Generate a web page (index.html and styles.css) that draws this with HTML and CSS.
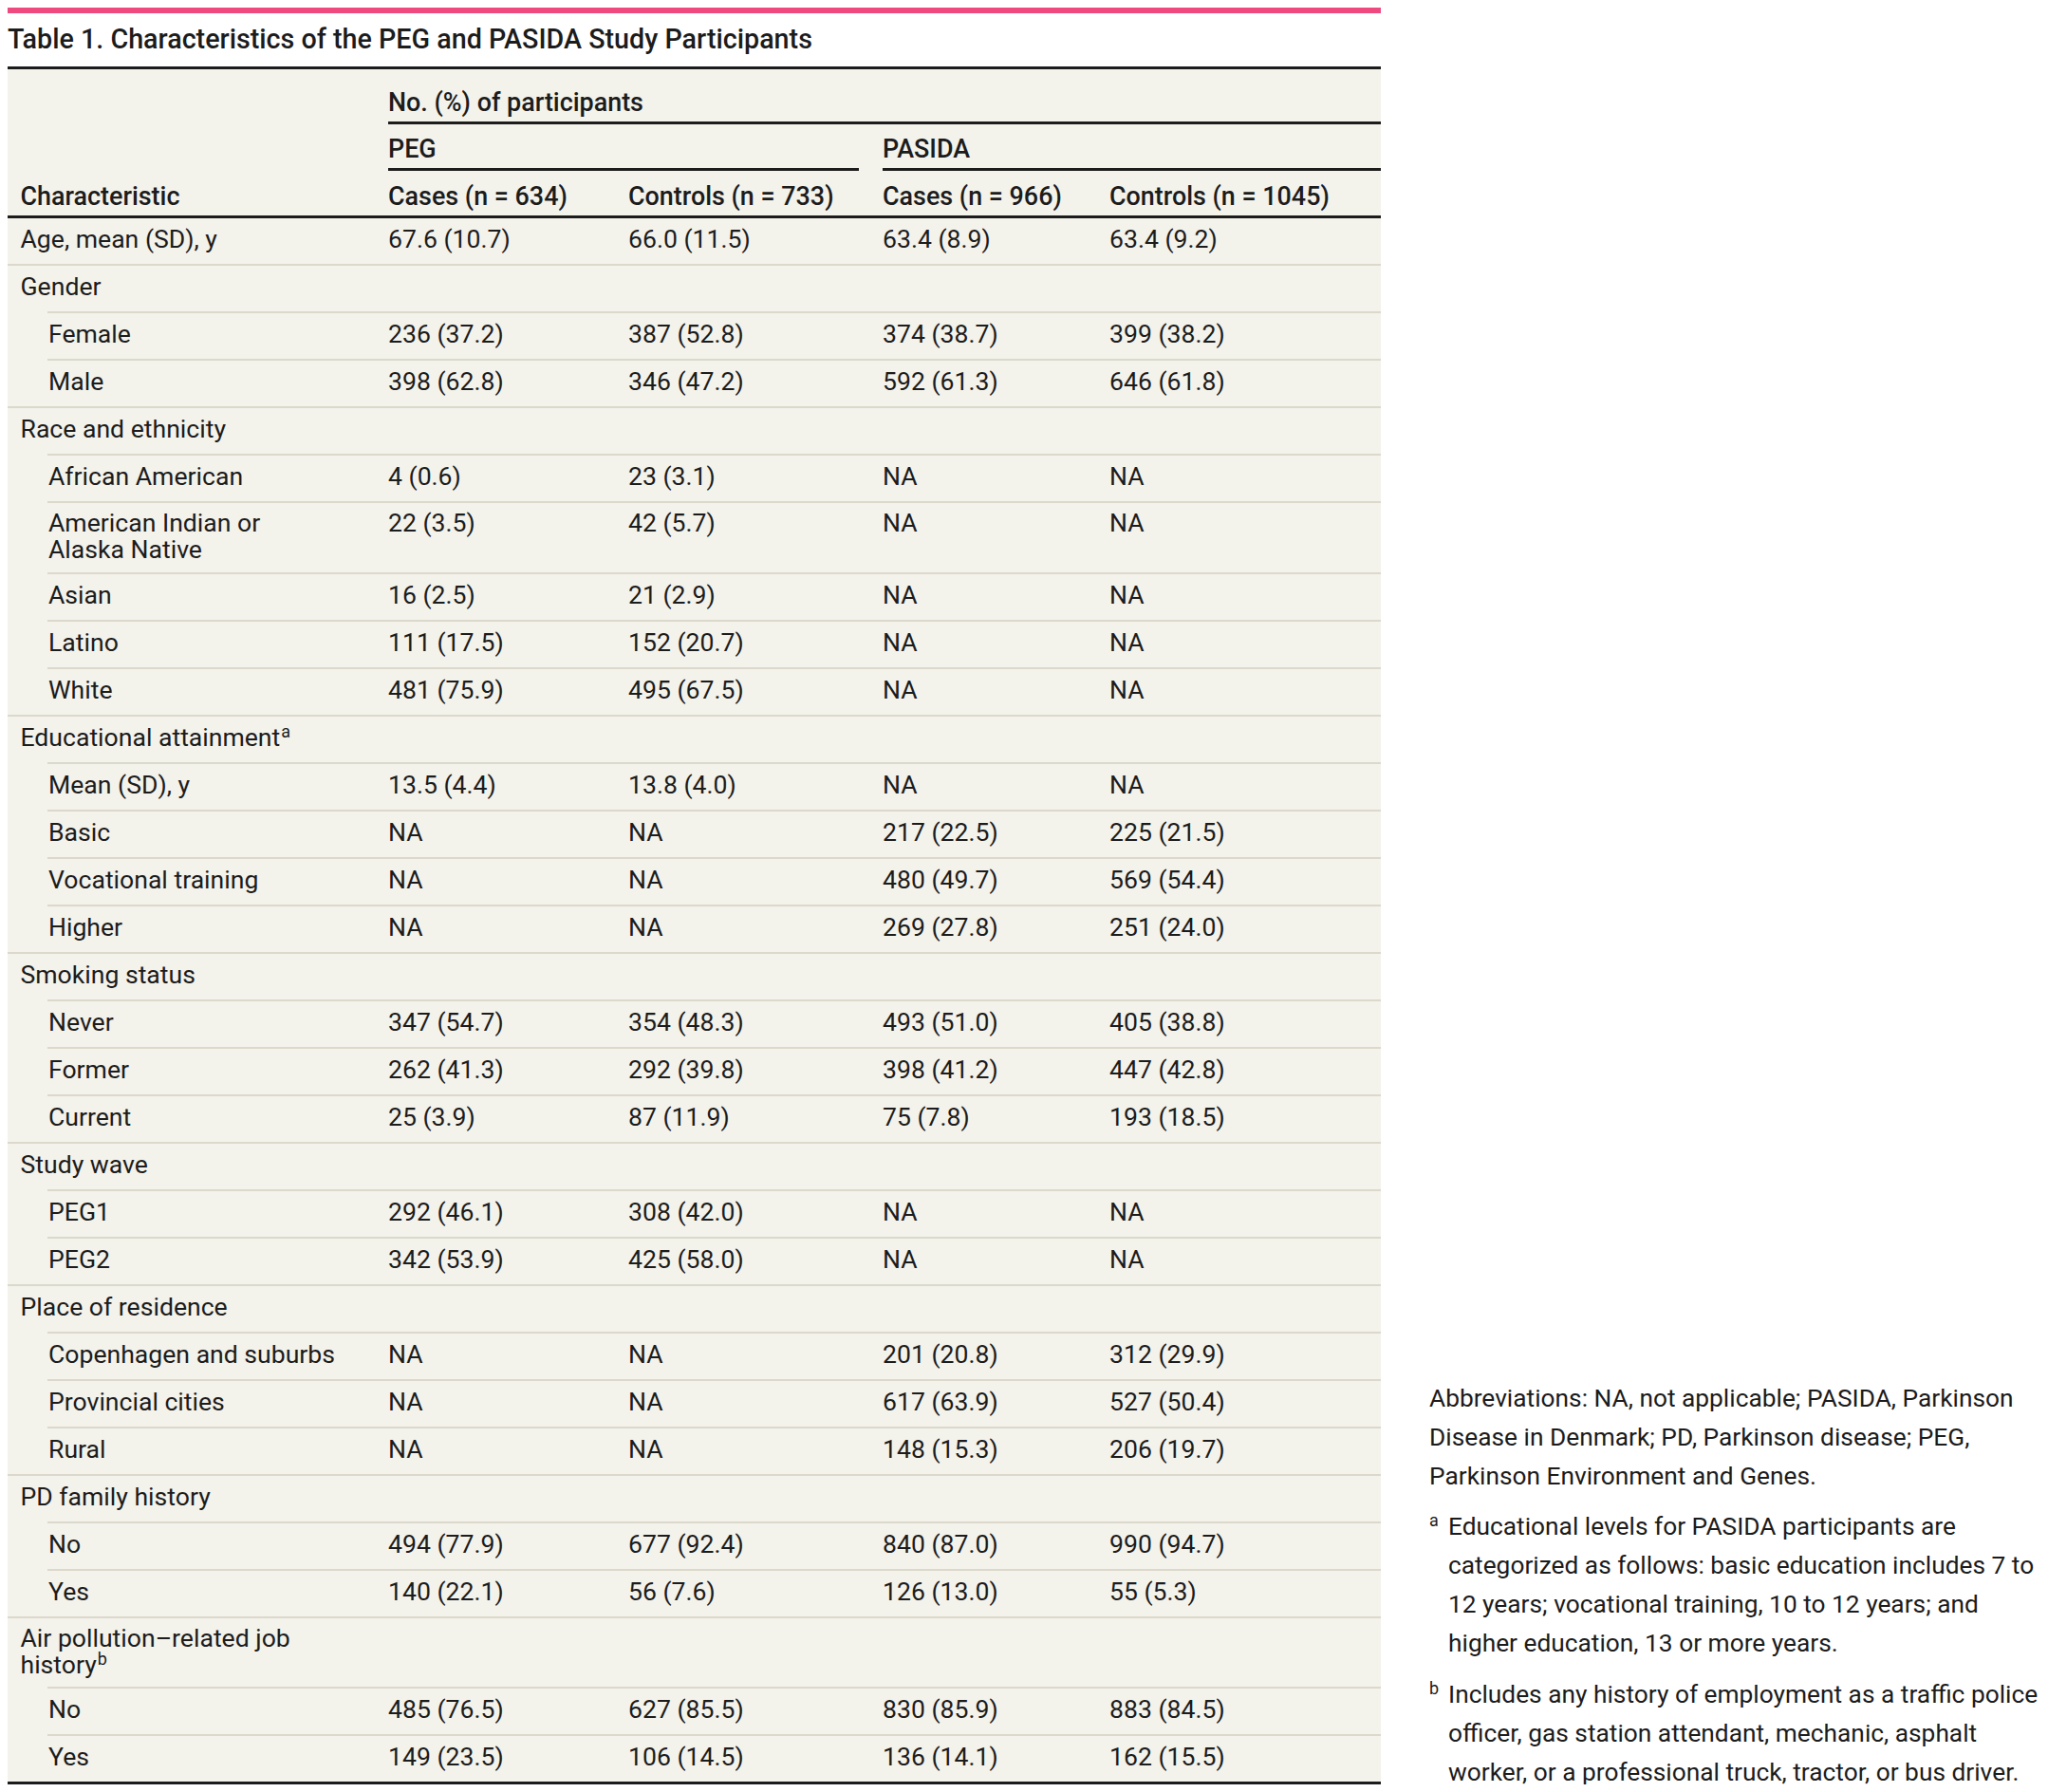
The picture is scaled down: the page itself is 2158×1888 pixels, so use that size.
FILE: index.html
```html
<!DOCTYPE html>
<html lang="en">
<head>
<meta charset="utf-8">
<title>Table 1. Characteristics of the PEG and PASIDA Study Participants</title>
<link rel="stylesheet" href="styles.css">
</head>
<body>
<div class="page">
  <div class="table-wrap">
    <div class="accent"></div>
    <h1 class="title">Table 1. Characteristics of the PEG and PASIDA Study Participants</h1>
    <div class="table">
      <div class="thead">
        <div class="hrow">
          <div class="hcell span-all">No. (%) of participants</div>
        </div>
        <div class="hrow">
          <div class="hcell span-peg">PEG</div>
          <div class="hcell span-pasida">PASIDA</div>
        </div>
        <div class="hrow cols">
          <div class="hcell first">Characteristic</div>
          <div class="hcell">Cases (n = 634)</div>
          <div class="hcell">Controls (n = 733)</div>
          <div class="hcell">Cases (n = 966)</div>
          <div class="hcell">Controls (n = 1045)</div>
        </div>
      </div>
      <div class="tbody">
        <div class="row"><div>Age, mean (SD), y</div><div>67.6 (10.7)</div><div>66.0 (11.5)</div><div>63.4 (8.9)</div><div>63.4 (9.2)</div></div>
        <div class="row"><div>Gender</div></div>
        <div class="row sub"><div>Female</div><div>236 (37.2)</div><div>387 (52.8)</div><div>374 (38.7)</div><div>399 (38.2)</div></div>
        <div class="row sub"><div>Male</div><div>398 (62.8)</div><div>346 (47.2)</div><div>592 (61.3)</div><div>646 (61.8)</div></div>
        <div class="row"><div>Race and ethnicity</div></div>
        <div class="row sub"><div>African American</div><div>4 (0.6)</div><div>23 (3.1)</div><div>NA</div><div>NA</div></div>
        <div class="row sub two"><div>American Indian or<br>Alaska Native</div><div>22 (3.5)</div><div>42 (5.7)</div><div>NA</div><div>NA</div></div>
        <div class="row sub"><div>Asian</div><div>16 (2.5)</div><div>21 (2.9)</div><div>NA</div><div>NA</div></div>
        <div class="row sub"><div>Latino</div><div>111 (17.5)</div><div>152 (20.7)</div><div>NA</div><div>NA</div></div>
        <div class="row sub"><div>White</div><div>481 (75.9)</div><div>495 (67.5)</div><div>NA</div><div>NA</div></div>
        <div class="row"><div>Educational attainment<sup class="sup">a</sup></div></div>
        <div class="row sub"><div>Mean (SD), y</div><div>13.5 (4.4)</div><div>13.8 (4.0)</div><div>NA</div><div>NA</div></div>
        <div class="row sub"><div>Basic</div><div>NA</div><div>NA</div><div>217 (22.5)</div><div>225 (21.5)</div></div>
        <div class="row sub"><div>Vocational training</div><div>NA</div><div>NA</div><div>480 (49.7)</div><div>569 (54.4)</div></div>
        <div class="row sub"><div>Higher</div><div>NA</div><div>NA</div><div>269 (27.8)</div><div>251 (24.0)</div></div>
        <div class="row"><div>Smoking status</div></div>
        <div class="row sub"><div>Never</div><div>347 (54.7)</div><div>354 (48.3)</div><div>493 (51.0)</div><div>405 (38.8)</div></div>
        <div class="row sub"><div>Former</div><div>262 (41.3)</div><div>292 (39.8)</div><div>398 (41.2)</div><div>447 (42.8)</div></div>
        <div class="row sub"><div>Current</div><div>25 (3.9)</div><div>87 (11.9)</div><div>75 (7.8)</div><div>193 (18.5)</div></div>
        <div class="row"><div>Study wave</div></div>
        <div class="row sub"><div>PEG1</div><div>292 (46.1)</div><div>308 (42.0)</div><div>NA</div><div>NA</div></div>
        <div class="row sub"><div>PEG2</div><div>342 (53.9)</div><div>425 (58.0)</div><div>NA</div><div>NA</div></div>
        <div class="row"><div>Place of residence</div></div>
        <div class="row sub"><div>Copenhagen and suburbs</div><div>NA</div><div>NA</div><div>201 (20.8)</div><div>312 (29.9)</div></div>
        <div class="row sub"><div>Provincial cities</div><div>NA</div><div>NA</div><div>617 (63.9)</div><div>527 (50.4)</div></div>
        <div class="row sub"><div>Rural</div><div>NA</div><div>NA</div><div>148 (15.3)</div><div>206 (19.7)</div></div>
        <div class="row"><div>PD family history</div></div>
        <div class="row sub"><div>No</div><div>494 (77.9)</div><div>677 (92.4)</div><div>840 (87.0)</div><div>990 (94.7)</div></div>
        <div class="row sub"><div>Yes</div><div>140 (22.1)</div><div>56 (7.6)</div><div>126 (13.0)</div><div>55 (5.3)</div></div>
        <div class="row two"><div>Air pollution–related job<br>history<sup class="sup">b</sup></div></div>
        <div class="row sub"><div>No</div><div>485 (76.5)</div><div>627 (85.5)</div><div>830 (85.9)</div><div>883 (84.5)</div></div>
        <div class="row sub"><div>Yes</div><div>149 (23.5)</div><div>106 (14.5)</div><div>136 (14.1)</div><div>162 (15.5)</div></div>
      </div>
    </div>
  </div>
  <div class="notes">
    <p class="note">Abbreviations: NA, not applicable; PASIDA, Parkinson<br>Disease in Denmark; PD, Parkinson disease; PEG,<br>Parkinson Environment and Genes.</p>
    <p class="note fn"><span class="mark">a</span><span>Educational levels for PASIDA participants are<br>categorized as follows: basic education includes 7 to<br>12 years; vocational training, 10 to 12 years; and<br>higher education, 13 or more years.</span></p>
    <p class="note fn"><span class="mark">b</span><span>Includes any history of employment as a traffic police<br>officer, gas station attendant, mechanic, asphalt<br>worker, or a professional truck, tractor, or bus driver.</span></p>
  </div>
</div>
</body>
</html>
```
FILE: styles.css
```css
html {
  overflow: hidden;
}

body {
  margin: 0;
  background: #ffffff;
  color: #1c1c1c;
  font-family: Roboto, "Liberation Sans", Arial, sans-serif;
}

.page {
  display: flex;
  align-items: flex-end;
  gap: 51px;
  padding: 8px 0 0 8px;
}

.table-wrap {
  flex: none;
  width: 1447px;
}

.accent {
  height: 6px;
  background: #ef4a7f;
}

.title {
  margin: 10px 0 12px;
  font-size: 28.7px;
  font-weight: 500;
  line-height: 34px;
}

.table {
  background: #f3f2eb;
  border-top: 3px solid #1c1c1c;
  border-bottom: 3px solid #1c1c1c;
  font-size: 26.6px;
  line-height: 25px;
}

/* header */
.hrow {
  display: grid;
  grid-template-columns: 401px 253px 268px 239px 1fr;
  font-weight: 500;
  font-size: 26.9px;
}

.hcell.span-all {
  grid-column: 2 / 6;
  padding: 23px 0 7px;
  border-bottom: 3px solid #1c1c1c;
}

.hcell.span-peg {
  grid-column: 2 / 4;
  margin-right: 25px;
  padding: 14px 0 7px;
  border-bottom: 3px solid #1c1c1c;
}

.hcell.span-pasida {
  grid-column: 4 / 6;
  padding: 14px 0 7px;
  border-bottom: 3px solid #1c1c1c;
}

.hrow.cols {
  border-bottom: 3px solid #1c1c1c;
}

.hrow.cols .hcell {
  padding: 15px 0 7px;
}

.hrow.cols .hcell.first {
  padding-left: 13.5px;
}

/* body */
.row {
  display: grid;
  grid-template-columns: 401px 253px 268px 239px 1fr;
  padding: 9px 0 14px;
  border-top: 2px solid #dcd8cb;
}

.row:first-child {
  border-top: 0;
}

.row > :first-child {
  padding-left: 13.5px;
}

.row.sub {
  margin-left: 42px;
  grid-template-columns: 359px 253px 268px 239px 1fr;
}

.row.sub > :first-child {
  padding-left: 1px;
}

.row.two {
  padding: 7px 0 9.5px;
  line-height: 28px;
}

.sup {
  font-size: 18px;
  line-height: 0;
  vertical-align: 9px;
  margin-left: 1px;
}

/* footnotes */
.notes {
  flex: none;
  width: 652px;
  margin-bottom: -7.5px;
  font-size: 26.3px;
  line-height: 41px;
  white-space: nowrap;
}

.note {
  margin: 0 0 12.5px;
}

.note:last-child {
  margin-bottom: 0;
}

.fn {
  display: flex;
}

.mark {
  flex: none;
  width: 20px;
  padding-top: 5px;
  font-size: 18px;
  line-height: 18px;
}
```
